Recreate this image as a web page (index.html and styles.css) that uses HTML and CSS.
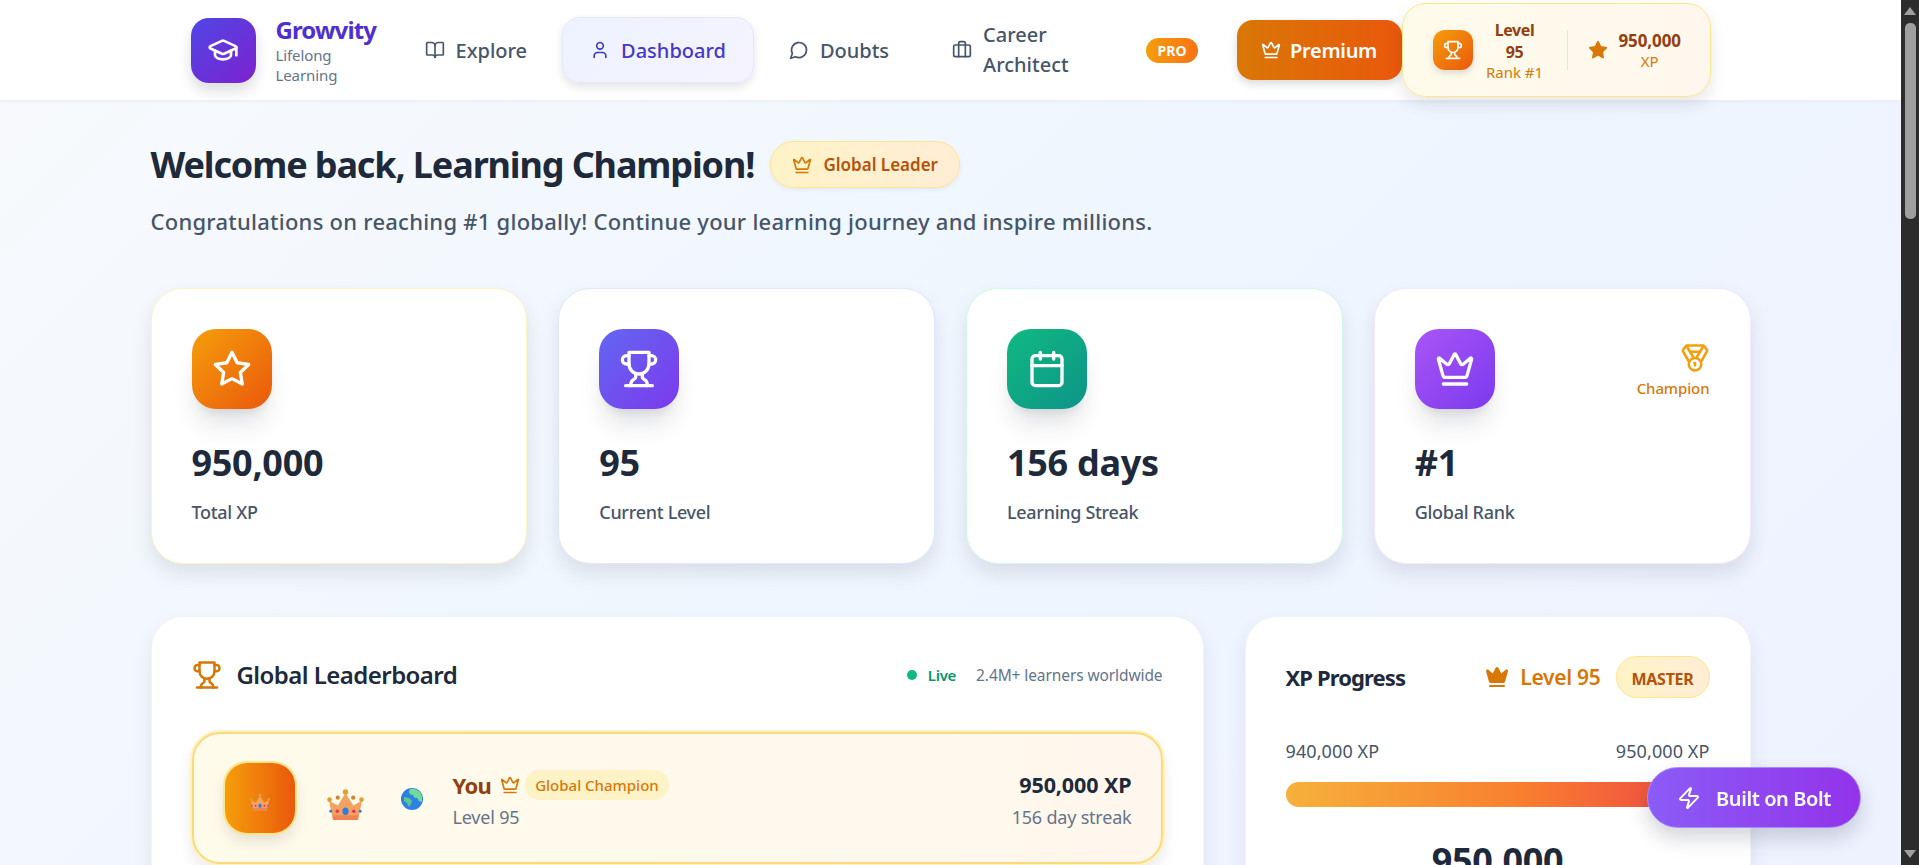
FILE: index.html
```html
<!DOCTYPE html>
<html lang="en">
<head>
    <meta charset="UTF-8">
    <meta name="viewport" content="width=device-width, initial-scale=1.0">
    <title>Growvity - Dashboard</title>
    <link rel="stylesheet" href="styles.css">
</head>
<body>
    <svg class="sprite" xmlns="http://www.w3.org/2000/svg">
        <symbol id="i-cap" viewBox="0 0 24 24"><path d="M21.42 10.922a1 1 0 0 0-.019-1.838L12.83 5.18a2 2 0 0 0-1.66 0L2.6 9.08a1 1 0 0 0 0 1.832l8.57 3.908a2 2 0 0 0 1.66 0z"/><path d="M22 10v6"/><path d="M6 12.5V16a6 3 0 0 0 12 0v-3.5"/></symbol>
        <symbol id="i-book" viewBox="0 0 24 24"><path d="M12 7v14"/><path d="M3 18a1 1 0 0 1-1-1V4a1 1 0 0 1 1-1h5a4 4 0 0 1 4 4 4 4 0 0 1 4-4h5a1 1 0 0 1 1 1v13a1 1 0 0 1-1 1h-6a3 3 0 0 0-3 3 3 3 0 0 0-3-3z"/></symbol>
        <symbol id="i-user" viewBox="0 0 24 24"><path d="M19 21v-2a4 4 0 0 0-4-4H9a4 4 0 0 0-4 4v2"/><circle cx="12" cy="7" r="4"/></symbol>
        <symbol id="i-chat" viewBox="0 0 24 24"><path d="M7.9 20A9 9 0 1 0 4 16.1L2 22Z"/></symbol>
        <symbol id="i-case" viewBox="0 0 24 24"><path d="M16 20V4a2 2 0 0 0-2-2h-4a2 2 0 0 0-2 2v16"/><rect width="20" height="14" x="2" y="6" rx="2"/></symbol>
        <symbol id="i-crown" viewBox="0 0 24 24"><path d="M11.562 3.266a.5.5 0 0 1 .876 0L15.39 8.87a1 1 0 0 0 1.516.294L21.183 5.5a.5.5 0 0 1 .798.519l-2.834 10.246a1 1 0 0 1-.956.734H5.81a1 1 0 0 1-.957-.734L2.02 6.02a.5.5 0 0 1 .798-.519l4.276 3.664a1 1 0 0 0 1.516-.294z"/><path d="M5 21h14"/></symbol>
        <symbol id="i-trophy" viewBox="0 0 24 24"><path d="M6 9H4.5a2.5 2.5 0 0 1 0-5H6"/><path d="M18 9h1.5a2.5 2.5 0 0 0 0-5H18"/><path d="M4 22h16"/><path d="M10 14.66V17c0 .55-.47.98-.97 1.21C7.85 18.75 7 20.24 7 22"/><path d="M14 14.66V17c0 .55.47.98.97 1.21C16.15 18.75 17 20.24 17 22"/><path d="M18 2H6v7a6 6 0 0 0 12 0V2Z"/></symbol>
        <symbol id="i-star" viewBox="0 0 24 24"><polygon points="12 2 15.09 8.26 22 9.27 17 14.14 18.18 21.02 12 17.77 5.82 21.02 7 14.14 2 9.27 8.91 8.26 12 2"/></symbol>
        <symbol id="i-calendar" viewBox="0 0 24 24"><path d="M8 2v4"/><path d="M16 2v4"/><rect width="18" height="18" x="3" y="4" rx="2"/><path d="M3 10h18"/></symbol>
        <symbol id="i-medal" viewBox="0 0 24 24"><path d="M7.21 15 2.66 7.14a2 2 0 0 1 .13-2.2L4.4 2.8A2 2 0 0 1 6 2h12a2 2 0 0 1 1.6.8l1.6 2.14a2 2 0 0 1 .14 2.2L16.79 15"/><path d="M11 12 5.12 2.2"/><path d="m13 12 5.88-9.8"/><path d="M8 7h8"/><circle cx="12" cy="17" r="5"/><path d="M12 18v-2h-.5"/></symbol>
        <symbol id="i-zap" viewBox="0 0 24 24"><path d="M4 14a1 1 0 0 1-.78-1.63l9.9-10.2a.5.5 0 0 1 .86.46l-1.92 6.02A1 1 0 0 0 13 10h7a1 1 0 0 1 .78 1.63l-9.9 10.2a.5.5 0 0 1-.86-.46l1.92-6.02A1 1 0 0 0 11 14z"/></symbol>
        <symbol id="e-crown" viewBox="0 0 38 32">
            <path d="M2 12l9 5 8-13 8 13 9-5-4 20H6z" fill="#f4a261"/>
            <path d="M5.500 27h27l-1 5h-25z" fill="#ef8354"/>
            <circle cx="2.500" cy="11" r="2.400" fill="#e0a030"/><circle cx="19" cy="3" r="2.800" fill="#e0a030"/><circle cx="35.500" cy="11" r="2.400" fill="#e0a030"/><circle cx="11" cy="9" r="2.200" fill="#c98a2b"/><circle cx="27" cy="9" r="2.200" fill="#c98a2b"/>
            <ellipse cx="19" cy="23" rx="3.200" ry="3.800" fill="#2f7de1"/><circle cx="10.500" cy="23" r="1.800" fill="#e8364f"/><circle cx="27.500" cy="23" r="1.800" fill="#e8364f"/><circle cx="3.800" cy="23" r="1.500" fill="#2f7de1"/><circle cx="34.200" cy="23" r="1.500" fill="#2f7de1"/>
        </symbol>
        <symbol id="e-globe" viewBox="0 0 22 22">
            <circle cx="11" cy="11" r="11" fill="#2f80e4"/>
            <path d="M9 1c4-1 9 1 11 5 1.500 3 1.500 6 .8 8l-3-1-1.500-3-3.300-.6-.8-2.400-3-.5-1.200-2.500z" fill="#6fdc9a"/>
            <path d="M3 9l5 1 3 3-1 3-2 3-2-4-3-2z" fill="#5cc98a"/>
        </symbol>
    </svg>

    <div class="window">
        <div class="page">
            <header class="topbar">
                <div class="topbar-inner">
                    <div class="brand">
                        <div class="brand-icon"><svg class="icon icon-32"><use href="#i-cap"/></svg></div>
                        <div>
                            <div class="brand-name">Growvity</div>
                            <div class="brand-sub">Lifelong<br>Learning</div>
                        </div>
                    </div>
                    <nav class="nav">
                        <a class="nav-link"><svg class="icon icon-20"><use href="#i-book"/></svg>Explore</a>
                        <a class="nav-link active"><svg class="icon icon-20"><use href="#i-user"/></svg>Dashboard</a>
                        <a class="nav-link"><svg class="icon icon-20"><use href="#i-chat"/></svg>Doubts</a>
                        <a class="nav-link"><svg class="icon icon-20"><use href="#i-case"/></svg><span class="nav-wrap">Career<br>Architect</span><span class="pro-tag">PRO</span></a>
                    </nav>
                    <button class="premium-btn"><svg class="icon icon-20"><use href="#i-crown"/></svg>Premium</button>
                    <div class="user-chip">
                        <div class="chip-icon"><svg class="icon icon-20"><use href="#i-trophy"/></svg></div>
                        <div class="chip-level">
                            <div class="chip-strong">Level<br>95</div>
                            <div class="chip-small">Rank #1</div>
                        </div>
                        <div class="chip-divider"></div>
                        <svg class="icon icon-20 star-fill"><use href="#i-star"/></svg>
                        <div class="chip-xp">
                            <div class="chip-strong">950,000</div>
                            <div class="chip-small">XP</div>
                        </div>
                    </div>
                </div>
            </header>

            <main class="container">
                <div class="welcome-row">
                    <h1>Welcome back, Learning Champion!</h1>
                    <span class="leader-badge"><svg class="icon icon-20"><use href="#i-crown"/></svg>Global Leader</span>
                </div>
                <p class="welcome-sub">Congratulations on reaching #1 globally! Continue your learning journey and inspire millions.</p>

                <section class="stats">
                    <div class="stat-card border-amber">
                        <div class="stat-top">
                            <div class="stat-icon bg-orange"><svg class="icon icon-40"><use href="#i-star"/></svg></div>
                        </div>
                        <div class="stat-value">950,000</div>
                        <div class="stat-label">Total XP</div>
                    </div>
                    <div class="stat-card border-indigo">
                        <div class="stat-top">
                            <div class="stat-icon bg-indigo"><svg class="icon icon-40"><use href="#i-trophy"/></svg></div>
                        </div>
                        <div class="stat-value">95</div>
                        <div class="stat-label">Current Level</div>
                    </div>
                    <div class="stat-card border-green">
                        <div class="stat-top">
                            <div class="stat-icon bg-green"><svg class="icon icon-40"><use href="#i-calendar"/></svg></div>
                        </div>
                        <div class="stat-value">156 days</div>
                        <div class="stat-label">Learning Streak</div>
                    </div>
                    <div class="stat-card border-purple">
                        <div class="stat-top">
                            <div class="stat-icon bg-purple"><svg class="icon icon-40"><use href="#i-crown"/></svg></div>
                            <div class="stat-flag">
                                <svg class="icon icon-30"><use href="#i-medal"/></svg>
                                <span>Champion</span>
                            </div>
                        </div>
                        <div class="stat-value">#1</div>
                        <div class="stat-label">Global Rank</div>
                    </div>
                </section>

                <section class="panels">
                    <div class="panel">
                        <div class="board-head">
                            <h2><svg class="icon icon-30 text-amber"><use href="#i-trophy"/></svg>Global Leaderboard</h2>
                            <div class="board-meta">
                                <span class="live-dot"></span>
                                <span class="live-text">Live</span>
                                <span class="learners">2.4M+ learners worldwide</span>
                            </div>
                        </div>
                        <div class="board-row">
                            <div class="rank-tile"><svg class="emoji-sm"><use href="#e-crown"/></svg></div>
                            <svg class="emoji-crown"><use href="#e-crown"/></svg>
                            <svg class="emoji-globe"><use href="#e-globe"/></svg>
                            <div class="row-info">
                                <div class="row-name">
                                    <span class="you">You</span>
                                    <svg class="icon icon-20 text-amber"><use href="#i-crown"/></svg>
                                    <span class="champ-tag">Global Champion</span>
                                </div>
                                <div class="row-level">Level 95</div>
                            </div>
                            <div class="row-score">
                                <div class="row-xp">950,000 XP</div>
                                <div class="row-level">156 day streak</div>
                            </div>
                        </div>
                    </div>

                    <div class="panel panel-side">
                        <div class="xp-head">
                            <h3>XP Progress</h3>
                            <div class="xp-level">
                                <svg class="icon icon-24 crown-fill"><use href="#i-crown"/></svg>
                                <span>Level 95</span>
                                <span class="master-tag">MASTER</span>
                            </div>
                        </div>
                        <div class="xp-range"><span>940,000 XP</span><span>950,000 XP</span></div>
                        <div class="xp-bar"></div>
                        <div class="xp-total">950,000</div>
                    </div>
                </section>
            </main>

            <a class="bolt-btn"><svg class="icon icon-24"><use href="#i-zap"/></svg>Built on Bolt</a>
        </div>

        <div class="scrollbar">
            <span class="arrow-up"></span>
            <span class="thumb"></span>
            <span class="arrow-down"></span>
        </div>
    </div>
</body>
</html>
```

FILE: styles.css
```css
* {
    box-sizing: border-box;
}
html, body {
    margin: 0;
    padding: 0;
    height: 100%;
    overflow: hidden;
}
body {
    font-family: "Noto Sans", "Open Sans", sans-serif;
    color: #1e293b;
}
.sprite {
    position: absolute;
    width: 0;
    height: 0;
}
.window {
    display: flex;
    height: 865px;
}
.page {
    position: relative;
    flex: 1;
    height: 865px;
    overflow: hidden;
    background: linear-gradient(135deg, #f8fafc 0%, #eff6ff 50%, #eef2ff 100%);
}

/* icons */
.icon {
    fill: none;
    stroke: currentColor;
    stroke-width: 2;
    stroke-linecap: round;
    stroke-linejoin: round;
    flex: none;
}
.icon-20 { width: 20px; height: 20px; }
.icon-24 { width: 24px; height: 24px; }
.icon-30 { width: 30px; height: 30px; }
.icon-32 { width: 32px; height: 32px; }
.icon-40 { width: 40px; height: 40px; }
.text-amber { color: #d97706; }

/* top bar */
.topbar {
    height: 101px;
    background: #fff;
    border-bottom: 1px solid #eef0f4;
    box-shadow: 0 1px 3px rgba(15, 23, 42, 0.04);
}
.topbar-inner {
    width: 1600px;
    margin: 0 auto;
    padding: 0 40px;
    height: 100px;
    display: flex;
    align-items: center;
}
.brand {
    width: 206px;
    flex: none;
    display: flex;
    align-items: center;
    gap: 20px;
}
.brand-icon {
    width: 65px;
    height: 65px;
    border-radius: 18px;
    background: linear-gradient(135deg, #4f46e5, #7e22ce);
    color: #fff;
    display: flex;
    align-items: center;
    justify-content: center;
    box-shadow: 0 8px 14px rgba(15, 23, 42, 0.14);
}
.brand-name {
    font-size: 24px;
    line-height: 30px;
    font-weight: 700;
    letter-spacing: -0.9px;
    color: #4f2fd0;
}
.brand-sub {
    font-size: 15px;
    line-height: 20px;
    color: #64748b;
    letter-spacing: -0.1px;
}
.nav {
    display: flex;
    align-items: center;
    gap: 7px;
    flex: none;
    width: 840px;
}
.nav-link {
    height: 66px;
    padding: 0 27px;
    display: flex;
    align-items: center;
    gap: 11px;
    font-size: 20px;
    font-weight: 500;
    color: #475569;
    border: 1px solid transparent;
    border-radius: 18px;
}
.nav-link.active {
    color: #4338ca;
    background: linear-gradient(135deg, #eef2ff, #f5f3ff);
    border-color: #e0e7ff;
    box-shadow: 0 4px 8px rgba(15, 23, 42, 0.12);
}
.nav-wrap {
    width: 152px;
    line-height: 30px;
}
.pro-tag {
    width: 52px;
    height: 25px;
    flex: none;
    border-radius: 13px;
    background: linear-gradient(90deg, #f59e0b, #f97316);
    color: #fff;
    font-size: 14px;
    font-weight: 700;
    display: flex;
    align-items: center;
    justify-content: center;
}
.premium-btn {
    width: 165px;
    height: 60px;
    flex: none;
    border: none;
    border-radius: 16px;
    background: linear-gradient(90deg, #d97706, #ea580c);
    color: #fff;
    font-family: inherit;
    font-size: 20px;
    font-weight: 600;
    letter-spacing: -0.3px;
    display: flex;
    align-items: center;
    justify-content: center;
    gap: 9px;
    box-shadow: 0 4px 8px rgba(15, 23, 42, 0.16);
}
.user-chip {
    width: 309px;
    height: 94px;
    flex: none;
    padding: 0 30px;
    display: flex;
    align-items: center;
    background: linear-gradient(90deg, #fffbeb, #fff7ed);
    border: 1px solid #fde68a;
    border-radius: 24px;
    box-shadow: 0 8px 16px rgba(15, 23, 42, 0.1);
    position: relative;
}
.chip-icon {
    width: 40px;
    height: 40px;
    flex: none;
    border-radius: 12px;
    background: linear-gradient(135deg, #f59e0b, #ea580c);
    color: #fff;
    display: flex;
    align-items: center;
    justify-content: center;
    box-shadow: 0 3px 6px rgba(15, 23, 42, 0.15);
}
.chip-level {
    width: 84px;
    flex: none;
    text-align: center;
}
.chip-strong {
    font-size: 16px;
    line-height: 22px;
    font-weight: 700;
    letter-spacing: -0.4px;
    color: #92400e;
}
.chip-small {
    font-size: 15px;
    line-height: 19px;
    color: #d97706;
}
.chip-divider {
    width: 1px;
    height: 40px;
    flex: none;
    background: #fde68a;
    margin: 0 20px 0 10px;
}
.star-fill {
    color: #d97706;
    fill: #d97706;
    margin-right: 11px;
}
.chip-xp {
    text-align: center;
}
.chip-xp .chip-strong {
    font-size: 17px;
    letter-spacing: -0.1px;
}

/* page content */
.container {
    width: 1600px;
    margin: 0 auto;
    padding-top: 40px;
}
.welcome-row {
    display: flex;
    align-items: center;
    gap: 16px;
    height: 47px;
}
h1 {
    margin: 0;
    font-size: 36px;
    line-height: 47px;
    font-weight: 700;
    letter-spacing: -1.13px;
}
.leader-badge {
    width: 190px;
    height: 47px;
    display: flex;
    align-items: center;
    justify-content: center;
    gap: 11px;
    border-radius: 24px;
    background: linear-gradient(90deg, #fef3c7, #ffedd5);
    border: 1px solid #fde68a;
    color: #b45309;
    font-size: 17px;
    font-weight: 600;
    box-shadow: 0 2px 4px rgba(15, 23, 42, 0.06);
}
.leader-badge .icon {
    color: #d97706;
}
.welcome-sub {
    margin: 19px 0 0;
    font-size: 22px;
    line-height: 28px;
    font-weight: 500;
    color: #475569;
    letter-spacing: 0.25px;
}

/* stat cards */
.stats {
    margin-top: 53px;
    display: grid;
    grid-template-columns: repeat(4, 1fr);
    gap: 31px;
}
.stat-card {
    height: 276px;
    padding: 40px;
    background: #fff;
    border: 1px solid #e2e8f0;
    border-radius: 32px;
    box-shadow: 0 10px 20px rgba(15, 23, 42, 0.1);
}
.border-amber { border-color: #fef3c7; }
.border-indigo { border-color: #e0e7ff; }
.border-green { border-color: #d1fae5; }
.border-purple { border-color: #f3e8ff; }
.stat-top {
    display: flex;
    justify-content: space-between;
    align-items: flex-start;
}
.stat-icon {
    width: 80px;
    height: 80px;
    border-radius: 24px;
    color: #fff;
    display: flex;
    align-items: center;
    justify-content: center;
    box-shadow: 0 20px 25px -5px rgba(15, 23, 42, 0.12), 0 8px 10px -6px rgba(15, 23, 42, 0.1);
}
.bg-orange { background: linear-gradient(135deg, #f59e0b, #ea580c); }
.bg-indigo { background: linear-gradient(135deg, #6366f1, #7c3aed); }
.bg-green { background: linear-gradient(135deg, #10b981, #0d9488); }
.bg-purple { background: linear-gradient(135deg, #a855f7, #7c3aed); }
.stat-flag {
    display: flex;
    flex-direction: column;
    align-items: flex-end;
    gap: 5px;
    margin-top: 14px;
    color: #f59e0b;
}
.stat-flag span {
    font-size: 15px;
    line-height: 20px;
    font-weight: 500;
    color: #d97706;
    letter-spacing: -0.1px;
}
.stat-value {
    margin-top: 33px;
    font-size: 36px;
    line-height: 42px;
    font-weight: 700;
    letter-spacing: -0.3px;
}
.stat-label {
    margin-top: 16px;
    font-size: 18px;
    line-height: 24px;
    font-weight: 500;
    color: #475569;
    letter-spacing: -0.3px;
}

/* lower panels */
.panels {
    margin-top: 52px;
    display: grid;
    grid-template-columns: 1fr 506px;
    gap: 41px;
}
.panel {
    min-height: 420px;
    padding: 41px 40px;
    background: #fff;
    border: 1px solid #f1f5f9;
    border-radius: 32px;
    box-shadow: 0 10px 20px rgba(15, 23, 42, 0.08);
}
.board-head {
    height: 34px;
    display: flex;
    justify-content: space-between;
    align-items: center;
}
h2 {
    margin: 0;
    display: flex;
    align-items: center;
    gap: 15px;
    font-size: 24px;
    line-height: 32px;
    font-weight: 600;
    letter-spacing: -0.55px;
}
.board-meta {
    display: flex;
    align-items: center;
    font-size: 15px;
}
.live-dot {
    width: 10px;
    height: 10px;
    border-radius: 50%;
    background: #10b981;
    margin-right: 11px;
}
.live-text {
    color: #059669;
    font-weight: 600;
    letter-spacing: -0.3px;
    margin-right: 20px;
}
.learners {
    color: #64748b;
    font-size: 15.500px;
    letter-spacing: -0.1px;
}
.board-row {
    margin-top: 40px;
    height: 132px;
    padding: 0 29px 0 31px;
    display: flex;
    align-items: center;
    background: linear-gradient(90deg, #fffbeb, #fff7ed);
    border: 2px solid #fcd97a;
    border-radius: 28px;
    box-shadow: 0 0 0 2px #fef3c7, 0 8px 16px rgba(15, 23, 42, 0.1);
}
.rank-tile {
    width: 70px;
    height: 70px;
    border-radius: 22px;
    background: linear-gradient(90deg, #f59e0b, #ea580c);
    display: flex;
    align-items: center;
    justify-content: center;
    box-shadow: 0 0 0 2px #fde68a, 0 8px 14px rgba(15, 23, 42, 0.12);
    flex: none;
}
.emoji-sm {
    width: 20px;
    height: 18px;
    margin-top: 8px;
}
.emoji-crown {
    width: 37px;
    height: 31px;
    margin: 12px 0 0 32px;
    flex: none;
}
.emoji-globe {
    width: 22px;
    height: 22px;
    margin: 2px 0 0 37px;
    flex: none;
}
.row-info {
    margin: 3px 0 0 30px;
    flex: 1;
}
.row-name {
    display: flex;
    align-items: center;
    gap: 9px;
    height: 30px;
}
.you {
    font-size: 22px;
    font-weight: 700;
    letter-spacing: -0.7px;
    color: #92400e;
}
.champ-tag {
    height: 30px;
    padding: 0 10px;
    display: flex;
    align-items: center;
    border-radius: 15px;
    background: #fef3c7;
    color: #d97706;
    font-size: 15px;
    font-weight: 500;
    margin-left: -4px;
}
.row-level {
    margin-top: 5px;
    font-size: 18px;
    line-height: 24px;
    color: #64748b;
    letter-spacing: -0.2px;
}
.row-score {
    margin-top: 3px;
    text-align: right;
}
.row-xp {
    font-size: 21.500px;
    line-height: 30px;
    font-weight: 700;
    letter-spacing: -0.1px;
}
.xp-head {
    height: 42px;
    display: flex;
    justify-content: space-between;
    align-items: center;
    margin-top: -2px;
}
h3 {
    margin: 0;
    font-size: 22px;
    font-weight: 700;
    letter-spacing: -0.9px;
}
.xp-level {
    display: flex;
    align-items: center;
    gap: 11px;
    font-size: 21px;
    font-weight: 600;
    color: #d97706;
    letter-spacing: -0.3px;
}
.crown-fill {
    fill: #d97706;
    color: #d97706;
}
.master-tag {
    margin-left: 4px;
    width: 94px;
    height: 42px;
    padding-top: 3px;
    display: flex;
    align-items: center;
    justify-content: center;
    border-radius: 21px;
    background: linear-gradient(90deg, #fef3c7, #ffedd5);
    border: 1px solid #fde68a;
    color: #b45309;
    font-size: 16px;
    font-weight: 700;
    letter-spacing: -0.3px;
}
.xp-range {
    margin-top: 41px;
    display: flex;
    justify-content: space-between;
    font-size: 18px;
    line-height: 24px;
    color: #475569;
    letter-spacing: 0.1px;
}
.xp-bar {
    margin-top: 19px;
    height: 25px;
    border-radius: 13px;
    background: linear-gradient(90deg, #f6b13b, #f97f2f 55%, #ef4444);
}
.xp-total {
    margin-top: 30px;
    text-align: center;
    font-size: 36px;
    line-height: 48px;
    font-weight: 700;
    letter-spacing: -0.3px;
}

/* floating button */
.bolt-btn {
    position: fixed;
    right: 58px;
    bottom: 37px;
    width: 214px;
    height: 61px;
    padding-top: 1px;
    display: flex;
    align-items: center;
    justify-content: center;
    gap: 15px;
    border-radius: 31px;
    background: linear-gradient(90deg, #8b5cf6, #9333ea);
    border: 1px solid #a78bfa;
    color: #fff;
    font-size: 20px;
    font-weight: 600;
    letter-spacing: -0.4px;
    box-shadow: 0 10px 20px rgba(15, 23, 42, 0.18);
}

/* window scrollbar */
.scrollbar {
    width: 18px;
    flex: none;
    height: 865px;
    background: #2c2c2c;
    display: flex;
    flex-direction: column;
    align-items: center;
    padding-top: 7px;
}
.arrow-up {
    width: 0;
    height: 0;
    border-left: 6px solid transparent;
    border-right: 6px solid transparent;
    border-bottom: 8px solid #9f9f9f;
}
.thumb {
    width: 11px;
    height: 196px;
    margin-top: 8px;
    border-radius: 5px;
    background: #9f9f9f;
}
.arrow-down {
    width: 0;
    height: 0;
    margin-top: auto;
    margin-bottom: 7px;
    border-left: 6px solid transparent;
    border-right: 6px solid transparent;
    border-top: 8px solid #9f9f9f;
}
```
